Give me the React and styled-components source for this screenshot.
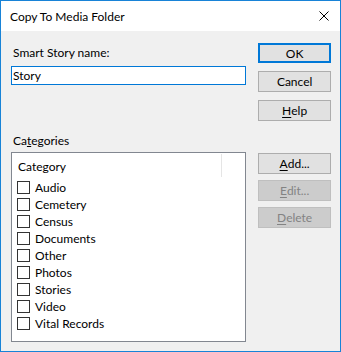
import React from "react";
import styled, { createGlobalStyle } from "styled-components";

const Global = createGlobalStyle`
  html, body { margin: 0; padding: 0; background: #ffffff; }
  body { font-family: Lato, "Noto Sans", sans-serif; font-size: 12px; color: #000; }
  * { box-sizing: border-box; }
`;

const Window = styled.div`
  width: 341px;
  height: 352px;
  border: 1px solid #1883d7;
  background: #f0f0f0;
  display: flex;
  flex-direction: column;
`;

const TitleBar = styled.div`
  height: 30px;
  background: #ffffff;
  display: flex;
  align-items: center;
  justify-content: space-between;
  padding: 0 11px 0 9px;
  font-size: 12px;
`;

const Body = styled.div`
  flex: 1;
  display: flex;
  padding: 12px 9px 0 10px;
  gap: 12px;
`;

const LeftCol = styled.div`
  width: 236px;
  display: flex;
  flex-direction: column;
`;

const RightCol = styled.div`
  width: 73px;
  display: flex;
  flex-direction: column;
`;

const Label = styled.div`
  line-height: 16px;
  padding-left: 2px;
  margin-top: ${(p) => p.$mt || 0}px;
`;

const TextBox = styled.div`
  margin-top: 5px;
  height: 19px;
  border: 1px solid #0078d7;
  background: #fff;
  padding: 0 1px;
  line-height: 17px;
`;

const ListBox = styled.div`
  margin-top: 3px;
  height: 190px;
  border: 1px solid #828790;
  background: #fff;
  display: flex;
  flex-direction: column;
`;

const Header = styled.div`
  height: 24px;
  display: flex;
  align-items: center;
  padding: 2px 0 0 6px;
  position: relative;
  margin-bottom: 2px;
`;

const HeaderSep = styled.div`
  position: absolute;
  left: 209px;
  top: 1px;
  width: 1px;
  height: 23px;
  background: #e5e5e5;
`;

const Row = styled.div`
  height: 17px;
  display: flex;
  align-items: center;
  padding-left: 5px;
  gap: 5px;
`;

const Check = styled.span`
  width: 13px;
  height: 13px;
  border: 1px solid #333333;
  background: #fff;
  flex: none;
`;

const Button = styled.div`
  height: ${(p) => (p.$focus ? 20 : 21)}px;
  display: flex;
  align-items: center;
  justify-content: center;
  background: ${(p) => (p.$disabled ? "#cccccc" : "#e1e1e1")};
  border: ${(p) => (p.$focus ? "2px solid #0078d7" : p.$disabled ? "1px solid #bfbfbf" : "1px solid #adadad")};
  color: ${(p) => (p.$disabled ? "#838383" : "#000")};
  margin-top: ${(p) => p.$mt || 0}px;
  u { text-decoration-thickness: 1px; text-underline-offset: 2px; }
`;

const items = ["Audio", "Cemetery", "Census", "Documents", "Other", "Photos", "Stories", "Video", "Vital Records"];

export default function App() {
  return (
    <>
      <Global />
      <Window>
        <TitleBar>
          <span>Copy To Media Folder</span>
          <svg width="10" height="10" viewBox="0 0 10 10">
            <path d="M0.5 0.5 L9.5 9.5 M9.5 0.5 L0.5 9.5" stroke="#000" strokeWidth="1" />
          </svg>
        </TitleBar>
        <Body>
          <LeftCol>
            <Label $mt={2}>Smart Story name:</Label>
            <TextBox>Story</TextBox>
            <Label $mt={48}>
              Ca<u>t</u>egories
            </Label>
            <ListBox>
              <Header>
                Category
                <HeaderSep />
              </Header>
              {items.map((it) => (
                <Row key={it}>
                  <Check />
                  <span>{it}</span>
                </Row>
              ))}
            </ListBox>
          </LeftCol>
          <RightCol>
            <Button $focus>OK</Button>
            <Button $mt={8}>Cancel</Button>
            <Button $mt={8}>
              <u>H</u>elp
            </Button>
            <Button $mt={32}>
              <u>A</u>dd...
            </Button>
            <Button $mt={6} $disabled>
              <u>E</u>dit...
            </Button>
            <Button $mt={6} $disabled>
              <u>D</u>elete
            </Button>
          </RightCol>
        </Body>
      </Window>
    </>
  );
}
